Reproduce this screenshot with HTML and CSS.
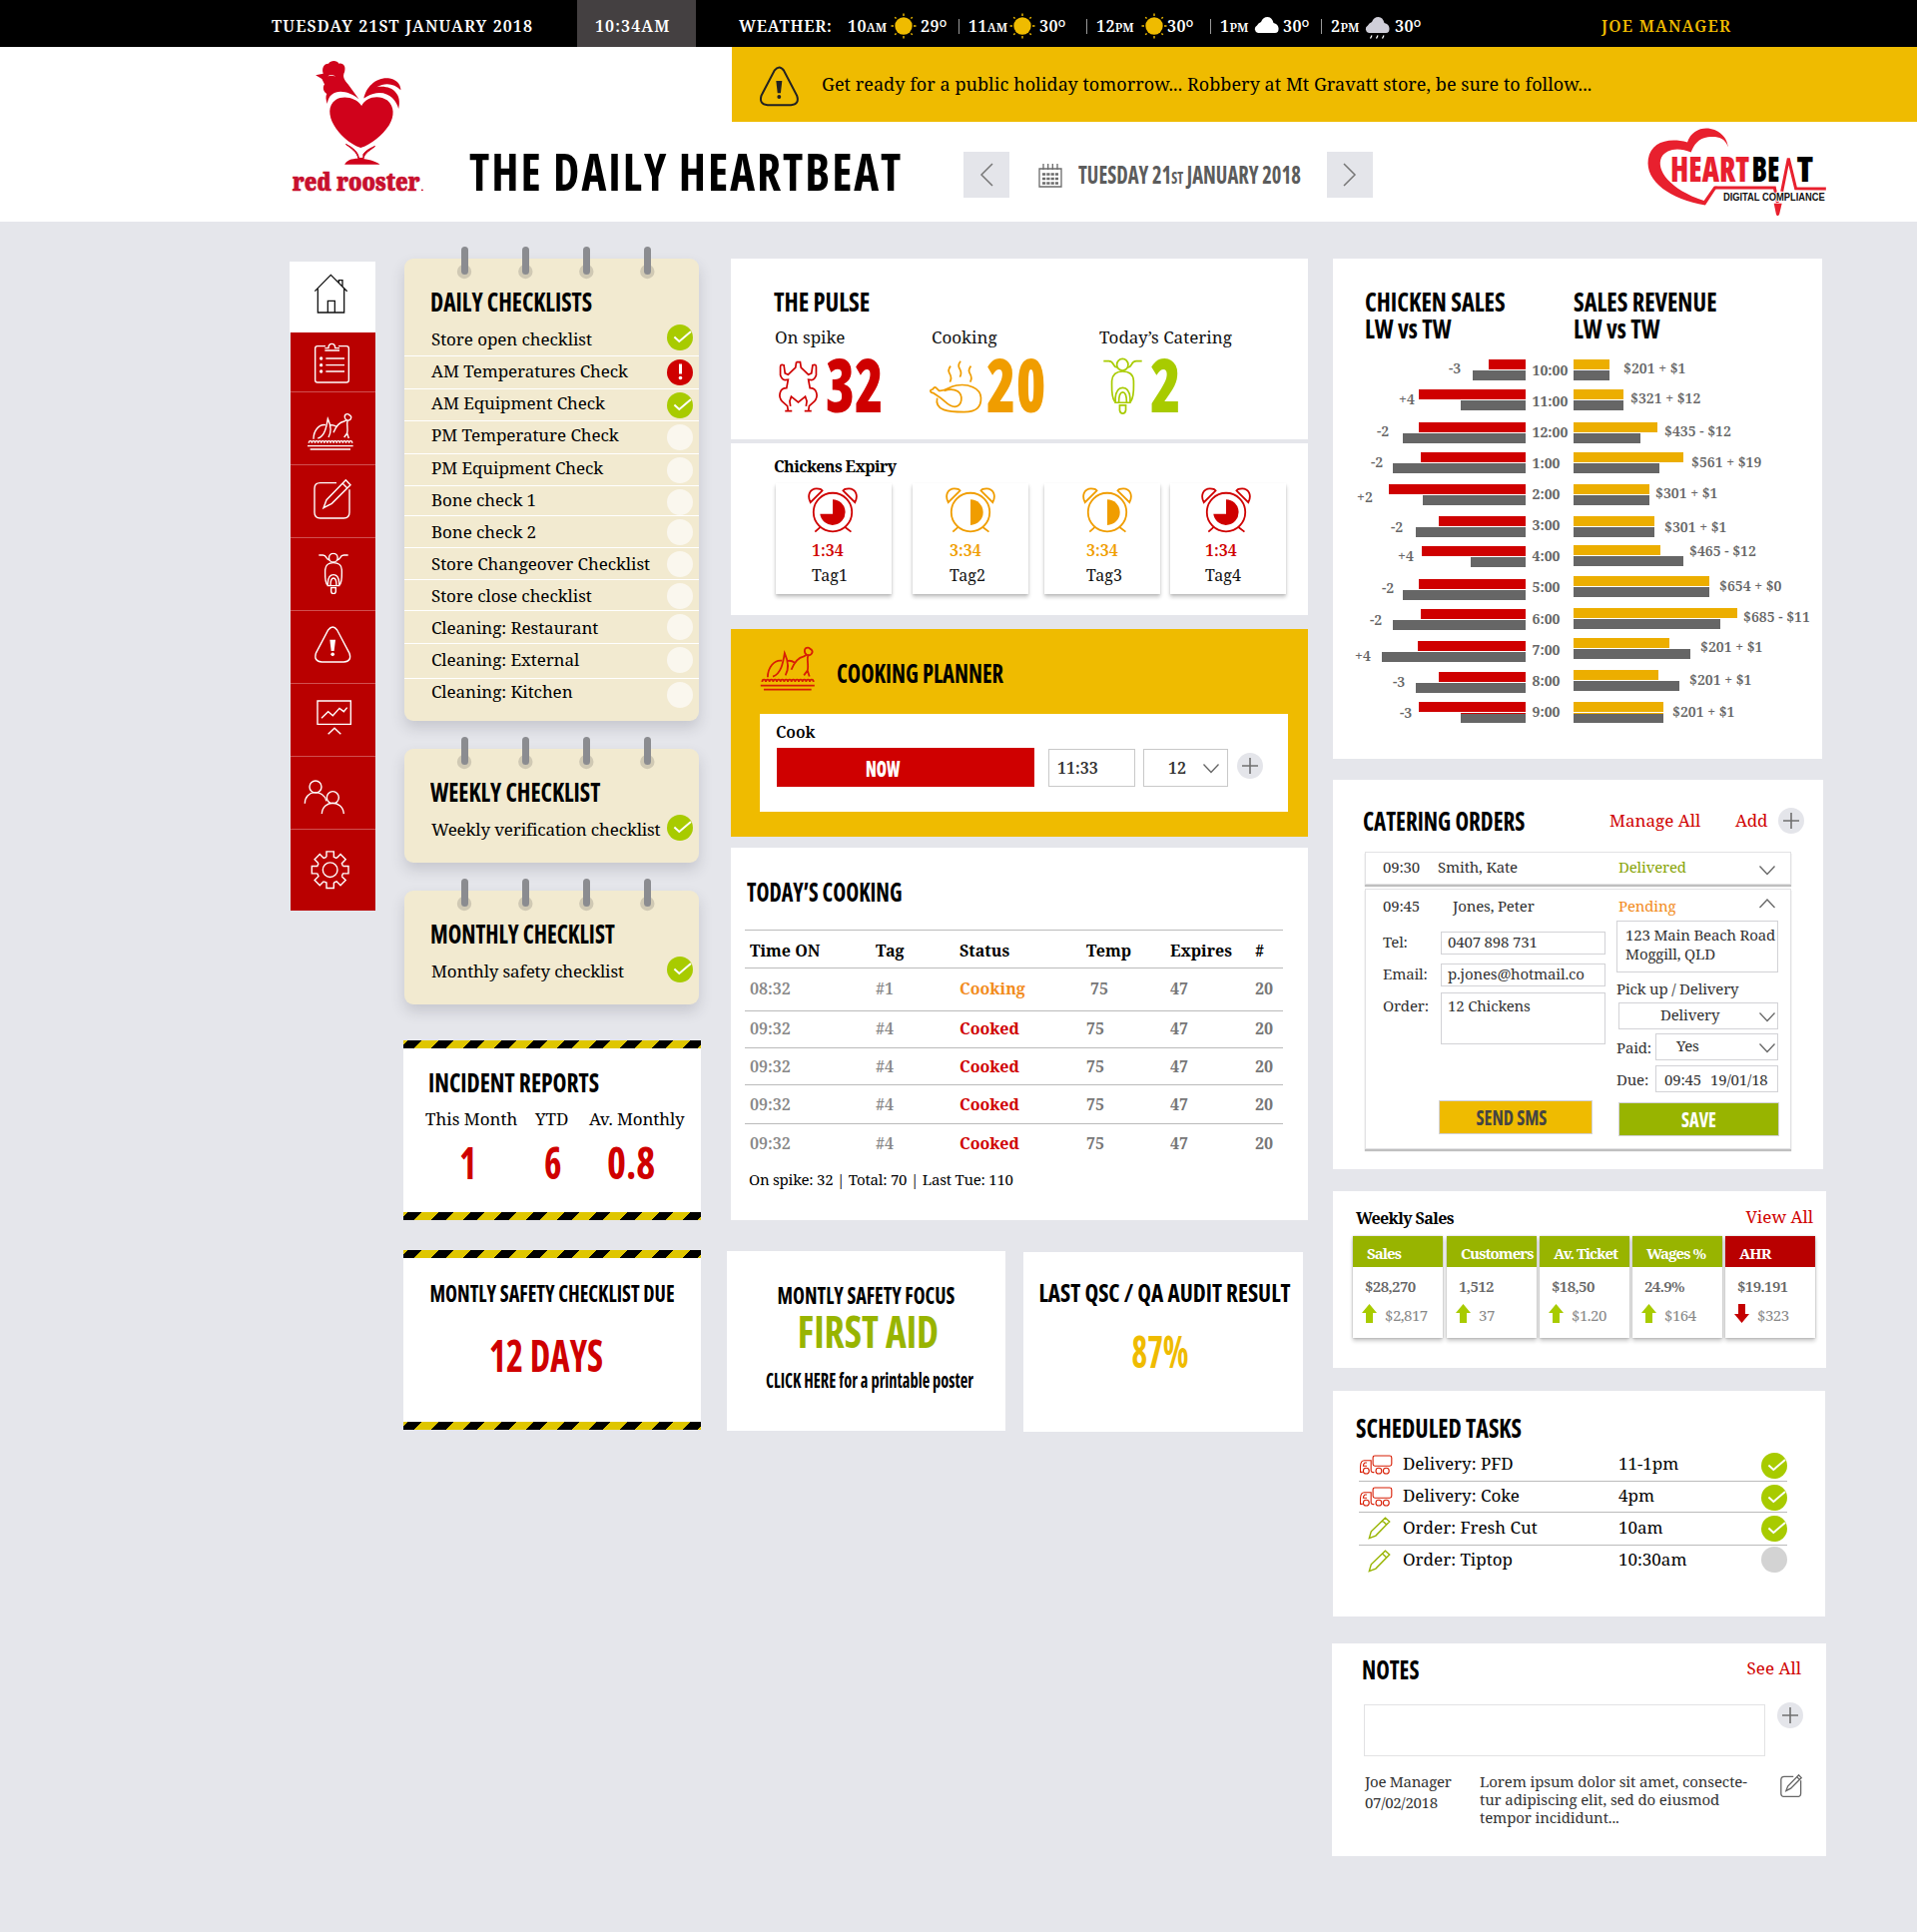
FILE: index.html
```html
<!DOCTYPE html>
<html lang="en">
<head>
<meta charset="utf-8">
<title>The Daily Heartbeat</title>
<link rel="stylesheet" href="styles.css">
</head>
<body>
<svg class="defs" aria-hidden="true">
  <symbol id="check" viewBox="0 0 26 26"><circle cx="13" cy="13" r="13" fill="#a8cb00"/><path d="M7.4 12.6 12.3 17 24 7" fill="none" stroke="#fff" stroke-width="2"/></symbol>
  <symbol id="warn" viewBox="0 0 26 26"><circle cx="13" cy="13" r="13" fill="#cf0000"/><path d="M13.5 4.5V14.5" stroke="#fff" stroke-width="3"/><circle cx="13.5" cy="18.5" r="1.8" fill="#fff"/></symbol>
  <symbol id="empty" viewBox="0 0 26 26"><circle cx="13" cy="13" r="13" fill="#faf7ee"/></symbol>
  <symbol id="plus" viewBox="0 0 26 26"><circle cx="13" cy="13" r="13" fill="#e4e5ea"/><path d="M5 13H21M13 5V21" stroke="#707070" stroke-width="1.6"/></symbol>
  <symbol id="down" viewBox="0 0 16 10"><path d="M.5 .5 8 8.5 15.5 .5"/></symbol>
  <symbol id="up" viewBox="0 0 16 10"><path d="M.5 9 8 1 15.5 9"/></symbol>
  <symbol id="sun" viewBox="0 0 26 26"><circle cx="13" cy="13" r="8.7" fill="#efbb00"/><path d="M13 .5V3M13 23V25.5M.5 13H3M23 13H25.5M4.2 4.2 5.6 5.6M20.4 20.4 21.8 21.8M4.2 21.8 5.6 20.4M20.4 5.6 21.8 4.2" stroke="#efbb00" stroke-width="1.4"/></symbol>
  <symbol id="cloud" viewBox="0 0 26 24"><path d="M4 17A4 4 0 0 1 3 9.500Q4 7 7 6 9 1 13.500 1 18 1 19.500 7 24 8 24.500 12 25 17 21 17Z"/></symbol>
  <symbol id="scooter" viewBox="115 940 94 126" preserveAspectRatio="none"><circle cx="161.500" cy="956" r="13"/><path d="M118 948H130Q137 948 141 956 145 963 150 962M206 948H193Q186 948 182 956 178 963 173 962"/><path d="M144 1038C135 1028 137 1010 137 992Q139 971 161.500 971 186 971 187 992C187 1010 189 1028 180 1038"/><path d="M145 1040V1030Q147 1007 162 1007 177 1007 179 1030V1040ZM153 1040Q153 1017 162 1017 171 1017 171 1040"/><path d="M155 1046H169V1057Q168 1064 162 1064 156 1064 155 1057Z"/></symbol>
  <symbol id="turkey" viewBox="82 520 142 116" preserveAspectRatio="none"><path d="M84 620H221M92 630H213M88 611q0-6 4.650-6 4.650 0 4.650 6 0-6 4.650-6 4.650 0 4.650 6 0-6 4.650-6 4.650 0 4.650 6 0-6 4.650-6 4.650 0 4.650 6 0-6 4.650-6 4.650 0 4.650 6 0-6 4.650-6 4.650 0 4.650 6 0-6 4.650-6 4.650 0 4.650 6 0-6 4.650-6 4.650 0 4.650 6 0-6 4.650-6 4.650 0 4.650 6 0-6 4.650-6 4.650 0 4.650 6 0-6 4.650-6 4.650 0 4.650 6 0-6 4.650-6 4.650 0 4.650 6 0-6 4.650-6 4.650 0 4.650 6 0-6 4.650-6 4.650 0 4.650 6"/><path d="M102 599C102 575 118 554 138 557M115 597C136 591 141 562 145 538 153 556 158 576 147 594M151 558C158 556 165 558 171 562M162 580C168 564 180 549 194 546L201 542C194 538 193 524 204 524 208 524 210 528 213 529 219 535 212 545 205 543 200 552 207 570 203 582L208 597M203 582 194 594"/></symbol>
  <symbol id="edit" viewBox="102 718 114 122"><path d="M171 731H122Q105 731 105 748V820Q105 837 122 837H193Q210 837 210 820V751"/><path d="M132 806 141 782 199 722 213 737 157 793ZM189 732 203 746"/></symbol>
  <symbol id="alert" viewBox="102 1160 116 114" preserveAspectRatio="none"><path d="M146 1173Q160 1155 173 1173L210 1243Q218 1267 193 1269H127Q102 1267 109 1243Z"/><path class="solid" d="M151 1202H168L164 1236H155Z"/><circle class="solid" cx="159.500" cy="1246" r="5.500"/></symbol>
  <symbol id="clock" viewBox="233 718 130 136" preserveAspectRatio="none"><ellipse cx="298" cy="792" rx="50" ry="57"/><path d="M240 763C230 740 240 722 256 722Q268 722 271 728ZM356 763C366 740 356 722 340 722Q328 722 325 728ZM266 836 252 850M330 836 346 850"/></symbol>
  <symbol id="truck" viewBox="108 832 104 62"><rect x="151" y="835" width="58" height="32" rx="6"/><path d="M119 886H112V868Q113 850 124 850H145V882Q147 888 155 886M132 857H126Q121 860 121 867H132"/><circle cx="130" cy="882" r="9"/><circle cx="169" cy="882" r="9"/><circle cx="192" cy="882" r="9"/></symbol>
  <symbol id="pencil" viewBox="134 1015 68 70"><path d="M137 1081 143 1060 186 1019 199 1030 157 1073ZM177 1027 191 1040"/></symbol>
  <symbol id="rings" viewBox="0 0 295 34"><g fill="#d0c9b4"><circle cx="60" cy="25" r="7.200"/><circle cx="121.300" cy="25" r="7.200"/><circle cx="182.300" cy="25" r="7.200"/><circle cx="243.300" cy="25" r="7.200"/></g><g fill="#8b8c90"><rect x="57" y="0" width="7" height="28" rx="3.500"/><rect x="118" y="0" width="7" height="28" rx="3.500"/><rect x="179" y="0" width="7" height="28" rx="3.500"/><rect x="240" y="0" width="7" height="28" rx="3.500"/></g></symbol>
</svg>

<div class="topbar">
  <div class="today">TUESDAY 21ST JANUARY 2018</div>
  <div class="now">10:34AM</div>
  <div class="weather">
    <span class="wlabel">WEATHER:</span>
    <span class="hour"><span>10<small>AM</small></span><svg><use href="#sun"/></svg><span>29<i>o</i></span></span>
    <span class="hour"><span>11<small>AM</small></span><svg><use href="#sun"/></svg><span>30<i>o</i></span></span>
    <span class="hour"><span>12<small>PM</small></span><svg><use href="#sun"/></svg><span>30<i>o</i></span></span>
    <span class="hour"><span>1<small>PM</small></span><svg class="cloud"><use href="#cloud"/></svg><span>30<i>o</i></span></span>
    <span class="hour"><span>2<small>PM</small></span><svg class="cloud rain"><use href="#cloud"/><path d="M7 19.500 5.500 22.500M13 19.500 11.500 22.500M19 19.500 17.500 22.500" stroke="#fff" stroke-width="1.300"/></svg><span>30<i>o</i></span></span>
  </div>
  <div class="user">JOE MANAGER</div>
</div>

<header class="header">
  <div class="brand">
    <svg class="rooster" viewBox="95 180 300 400" preserveAspectRatio="none">
      <g fill="#d0021b">
        <path d="M149 226 166 221C162 205 168 190 178 191 182 180 198 180 201 191 212 188 217 200 214 215 208 232 214 240 222 254L246 298C226 276 200 268 186 284 178 292 177 302 175 312 172 300 171 290 174 282 166 276 164 262 169 254L163 237Z"/>
        <path d="M257 296C262 262 284 232 312 235 328 237 340 252 340 271 326 252 306 246 286 262 318 254 344 280 335 327 330 300 310 270 278 282 268 286 262 292 257 296Z"/>
        <path d="M252 318C262 290 292 284 310 302 326 320 326 350 314 376 298 408 276 432 250 445 222 430 202 404 190 376 178 348 176 316 194 300 212 286 240 294 252 318Z"/>
        <path d="M217 434C228 446 242 456 245 478H256C258 460 272 452 282 440 272 446 262 452 256 464V476H246C244 456 232 444 217 434Z" stroke="#d0021b" stroke-width="1"/>
        <path d="M214 495C218 480 236 474 256 478 274 482 284 486 293 495Z"/>
      </g>
      <path d="M176 229Q186 220 194 230 186 226 176 229Z" fill="#fff"/>
      <text x="97" y="574" textLength="286" lengthAdjust="spacingAndGlyphs">red rooster</text>
      <circle cx="388" cy="572" r="2.500" fill="#c8102e"/>
    </svg>
    <h1 class="title">THE DAILY HEARTBEAT</h1>
  </div>
  <div class="banner">
    <svg><use href="#alert"/></svg>
    <p>Get ready for a public holiday tomorrow... Robbery at Mt Gravatt store, be sure to follow...</p>
  </div>
  <div class="datenav">
    <button class="step"><svg viewBox="0 0 14 24"><path d="M13 1 2 12 13 23"/></svg></button>
    <svg class="calendar" viewBox="0 0 24 24"><path d="M1 5H23V23H1ZM5 0V6M9.700 0V6M14.300 0V6M19 0V6" fill="none" stroke="#6b6b6b" stroke-width="1.300"/><path d="M4 10.500H20M4 15H20M4 19.500H20" fill="none" stroke="#6b6b6b" stroke-width="2.600" stroke-dasharray="3.200 1.100"/></svg>
    <h2 class="cond date">TUESDAY 21<small>ST</small> JANUARY 2018</h2>
    <button class="step"><svg viewBox="0 0 14 24"><path d="M1 1 12 12 1 23"/></svg></button>
    <svg class="hb" viewBox="590 380 560 280">
      <path d="M841 445C830 410 800 412 780 414 752 418 738 436 729 460 690 444 655 450 640 475 622 512 664 572 768 606L798 563H809L772 619C668 602 590 548 600 480 608 430 660 414 718 430 730 390 770 380 800 392 826 404 838 420 841 445Z" fill="#e8202e"/>
      <path d="M800 566.500H981L990 612M1003 578 1023 478 1045 569 1136 570" fill="none" stroke="#e8202e" stroke-width="3"/>
      <path d="M979 614H1003L995 648Q990 655 986 648Z" fill="#e8202e"/>
      <text class="hand red" x="667" y="550" textLength="238" lengthAdjust="spacingAndGlyphs">HEART</text>
      <text class="hand" x="912" y="548" textLength="84" lengthAdjust="spacingAndGlyphs">BE</text>
      <text class="hand" x="1048" y="550" textLength="50" lengthAdjust="spacingAndGlyphs">T</text>
      <text class="tagline" x="826" y="606" textLength="307" lengthAdjust="spacingAndGlyphs">DIGITAL COMPLIANCE</text>
    </svg>
  </div>
</header>

<main class="main">
  <nav class="side">
    <a class="home"><svg viewBox="30 66 258 213"><path d="M106 155 154 106 203 155M115 148V219H194V148M145 219V184H166V219M178 128V122H189V142"/></svg></a>
    <a><svg viewBox="33 279 255 180"><path d="M138 320H114Q107 320 107 327V422Q107 429 114 429H201Q208 429 208 422V327Q208 320 201 320H177"/><path d="M136 333H180M136 326H147Q147 313 157 313 167 313 167 326H180M139 357H195M139 377H195M139 396H195"/><circle class="solid" cx="125" cy="357" r="5"/><circle class="solid" cx="125" cy="377" r="5"/><circle class="solid" cx="125" cy="396" r="5"/></svg></a>
    <a><svg viewBox="33 459 255 219"><use href="#turkey" x="82" y="520" width="142" height="116"/></svg></a>
    <a><svg viewBox="33 678 255 219"><use href="#edit" x="102" y="718" width="114" height="122"/></svg></a>
    <a><svg viewBox="33 897 255 219"><use href="#scooter" x="115" y="940" width="94" height="126"/></svg></a>
    <a><svg viewBox="33 1116 255 219"><use href="#alert" x="102" y="1160" width="116" height="114"/></svg></a>
    <a><svg viewBox="33 1335 255 219"><path d="M114 1386H214V1456H114ZM126 1438 146 1418 160 1430 180 1408 193 1418 203 1406M146 1486 165 1468 184 1486"/></svg></a>
    <a><svg viewBox="33 115 255 219"><circle cx="108" cy="205" r="18"/><path d="M76 255C76 213 132 211 141 248"/><circle cx="160" cy="237" r="18"/><path d="M127 286C129 243 190 243 193 286"/></svg></a>
    <a><svg viewBox="33 334 255 242"><g transform="translate(152 454)"><circle r="22"/><path id="cog" d="M-11-38.500V-55H11V-38.500L19.400-35"/><use href="#cog" transform="rotate(45)"/><use href="#cog" transform="rotate(90)"/><use href="#cog" transform="rotate(135)"/><use href="#cog" transform="rotate(180)"/><use href="#cog" transform="rotate(225)"/><use href="#cog" transform="rotate(270)"/><use href="#cog" transform="rotate(315)"/></g></svg></a>
  </nav>

  <div class="col checks">
    <section class="pad daily">
      <svg class="rings"><use href="#rings"/></svg>
      <h2 class="cond">DAILY CHECKLISTS</h2>
      <ul>
        <li><span>Store open checklist</span><svg><use href="#check"/></svg></li>
        <li><span>AM Temperatures Check</span><svg><use href="#warn"/></svg></li>
        <li><span>AM Equipment Check</span><svg><use href="#check"/></svg></li>
        <li><span>PM Temperature Check</span><svg><use href="#empty"/></svg></li>
        <li><span>PM Equipment Check</span><svg><use href="#empty"/></svg></li>
        <li><span>Bone check 1</span><svg><use href="#empty"/></svg></li>
        <li><span>Bone check 2</span><svg><use href="#empty"/></svg></li>
        <li><span>Store Changeover Checklist</span><svg><use href="#empty"/></svg></li>
        <li><span>Store close checklist</span><svg><use href="#empty"/></svg></li>
        <li><span>Cleaning: Restaurant</span><svg><use href="#empty"/></svg></li>
        <li><span>Cleaning: External</span><svg><use href="#empty"/></svg></li>
        <li><span>Cleaning: Kitchen</span><svg><use href="#empty"/></svg></li>
      </ul>
    </section>
    <section class="pad short">
      <svg class="rings"><use href="#rings"/></svg>
      <h2 class="cond">WEEKLY CHECKLIST</h2>
      <ul><li><span>Weekly verification checklist</span><svg><use href="#check"/></svg></li></ul>
    </section>
    <section class="pad short monthly">
      <svg class="rings"><use href="#rings"/></svg>
      <h2 class="cond">MONTHLY CHECKLIST</h2>
      <ul><li><span>Monthly safety checklist</span><svg><use href="#check"/></svg></li></ul>
    </section>
    <section class="hazard incidents">
      <h2 class="cond">INCIDENT REPORTS</h2>
      <div class="stats">
        <div><span>This Month</span><b class="cond">1</b></div>
        <div><span>YTD</span><b class="cond">6</b></div>
        <div><span>Av. Monthly</span><b class="cond">0.8</b></div>
      </div>
    </section>
    <section class="hazard due">
      <h3 class="cond">MONTLY SAFETY CHECKLIST DUE</h3>
      <b class="cond big">12 DAYS</b>
    </section>
  </div>

  <div class="col middle">
    <section class="card pulse">
      <h2 class="cond">THE PULSE</h2>
      <div class="figures">
        <div class="fig red"><span>On spike</span><div>
          <svg class="raw" viewBox="156 334 100 154" preserveAspectRatio="none"><path d="M201 339H211L213 355 232 376 240 372 243 348Q252 344 252 353V378Q248 392 240 392L232 391 236 416C254 416 259 440 247 456L234 469 232 484M222 484H240M201 339 199 355 180 376 172 372 169 348Q160 344 160 353V378Q164 392 172 392L180 391 176 416C158 416 153 440 165 456L178 469 180 484M190 484H172M186 470 184 455 188 441 206 458 224 441 228 455 226 470"/></svg>
          <b class="cond">32</b></div></div>
        <div class="fig orange"><span>Cooking</span><div>
          <svg class="roast" viewBox="550 330 138 162" preserveAspectRatio="none"><path d="M570 446C562 484 600 488 640 488 675 488 685 470 684 445 683 415 650 402 620 408 600 412 590 427 575 424L567 415C561 411 560 418 558 420 550 420 550 430 560 431L572 440C590 452 598 472 616 472 636 470 638 438 624 426 612 417 598 420 588 424M605 350Q596 362 603 374 609 386 603 398M631 335Q622 348 629 359 635 372 629 383M658 350Q649 362 656 374 662 386 656 398"/></svg>
          <b class="cond">20</b></div></div>
        <div class="fig green"><span>Today’s Catering</span><div>
          <svg class="scoot"><use href="#scooter"/></svg>
          <b class="cond">2</b></div></div>
      </div>
    </section>
    <section class="card expiry">
      <h4>Chickens Expiry</h4>
      <div class="tags">
        <div class="tag red"><svg viewBox="233 718 130 136" preserveAspectRatio="none"><use href="#clock" x="233" y="718" width="130" height="136"/><path class="solid" d="M298 754A33 38 0 1 1 265 797H298Z"/></svg><b>1:34</b><span>Tag1</span></div>
        <div class="tag orange"><svg viewBox="233 718 130 136" preserveAspectRatio="none"><use href="#clock" x="233" y="718" width="130" height="136"/><path class="solid" d="M298 754A33 38 0 0 1 298 830Z"/></svg><b>3:34</b><span>Tag2</span></div>
        <div class="tag orange"><svg viewBox="233 718 130 136" preserveAspectRatio="none"><use href="#clock" x="233" y="718" width="130" height="136"/><path class="solid" d="M298 754A33 38 0 0 1 298 830Z"/></svg><b>3:34</b><span>Tag3</span></div>
        <div class="tag red"><svg viewBox="233 718 130 136" preserveAspectRatio="none"><use href="#clock" x="233" y="718" width="130" height="136"/><path class="solid" d="M298 754A33 38 0 1 1 265 797H298Z"/></svg><b>1:34</b><span>Tag4</span></div>
      </div>
    </section>
    <section class="planner">
      <div class="phead"><svg><use href="#turkey"/></svg><h2 class="cond">COOKING PLANNER</h2></div>
      <div class="pbox">
        <label>Cook</label>
        <div class="prow">
          <button class="cook"><span class="cond">NOW</span></button>
          <div class="field time">11:33</div>
          <div class="field qty">12<svg class="chev"><use href="#down"/></svg></div>
          <svg class="plus"><use href="#plus"/></svg>
        </div>
      </div>
    </section>
    <section class="card cooking">
      <h2 class="cond">TODAY’S COOKING</h2>
      <table>
        <tr><th>Time ON</th><th>Tag</th><th>Status</th><th>Temp</th><th>Expires</th><th>#</th></tr>
        <tr><td>08:32</td><td>#1</td><td class="orange">Cooking</td><td>75</td><td>47</td><td>20</td></tr>
        <tr><td>09:32</td><td>#4</td><td class="red">Cooked</td><td>75</td><td>47</td><td>20</td></tr>
        <tr><td>09:32</td><td>#4</td><td class="red">Cooked</td><td>75</td><td>47</td><td>20</td></tr>
        <tr><td>09:32</td><td>#4</td><td class="red">Cooked</td><td>75</td><td>47</td><td>20</td></tr>
        <tr><td>09:32</td><td>#4</td><td class="red">Cooked</td><td>75</td><td>47</td><td>20</td></tr>
      </table>
      <p>On spike: 32 | Total: 70 | Last Tue: 110</p>
    </section>
    <div class="pair">
      <section class="card focus">
        <h3 class="cond">MONTLY SAFETY FOCUS</h3>
        <b class="cond big">FIRST AID</b>
        <p class="cond">CLICK HERE for a printable poster</p>
      </section>
      <section class="card audit">
        <h3 class="cond">LAST QSC / QA AUDIT RESULT</h3>
        <b class="cond big">87%</b>
      </section>
    </div>
  </div>

  <div class="col right">
    <section class="card sales">
      <div class="sheads"><h2 class="cond">CHICKEN SALES<br>LW vs TW</h2><h2 class="cond">SALES REVENUE<br>LW vs TW</h2></div>
      <svg class="chart" viewBox="1335 355 490 380">
        <g fill="#cf0000"><path d="M1491 360h37v10h-37zM1421 390h107v10h-107zM1421 423h107v10h-107zM1423 453h105v10h-105zM1391 485h137v10h-137zM1441 517h87v10h-87zM1424 547h104v10h-104zM1421 580h107v10h-107zM1423 610h105v10h-105zM1420 642h108v10h-108zM1441 673h87v10h-87zM1421 703h107v10h-107zM1463 714h65v1h-65z"/></g>
        <g fill="#666"><path d="M1475 371h53v10h-53zM1463 401h65v10h-65zM1405 434h123v10h-123zM1395 464h133v10h-133zM1425 496h103v10h-103zM1418 528h110v10h-110zM1473 558h55v10h-55zM1405 591h123v10h-123zM1395 621h133v10h-133zM1384 653h144v10h-144zM1418 684h110v10h-110zM1463 715h65v9h-65z"/>
        <path d="M1576 371h36v10h-36zM1576 401h50v10h-50zM1576 434h67v10h-67zM1576 464h86v10h-86zM1576 496h76v10h-76zM1576 528h81v10h-81zM1576 557h110v10h-110zM1576 588h136v10h-136zM1576 620h147v10h-147zM1576 650h117v10h-117zM1576 682h106v10h-106zM1576 715h90v9h-90z"/></g>
        <g fill="#ecae00"><path d="M1576 360h36v10h-36zM1576 390h50v10h-50zM1576 423h84v10h-84zM1576 453h110v10h-110zM1576 485h76v10h-76zM1576 517h81v10h-81zM1576 546h87v10h-87zM1576 577h136v10h-136zM1576 609h164v10h-164zM1576 639h96v10h-96zM1576 671h85v10h-85zM1576 703h90v10h-90zM1576 714h90v1h-90z"/></g>
        <g class="delta"><text x="1451" y="374">-3</text><text x="1401" y="405">+4</text><text x="1379" y="437">-2</text><text x="1373" y="468">-2</text><text x="1359" y="503">+2</text><text x="1393" y="533">-2</text><text x="1400" y="562">+4</text><text x="1384" y="594">-2</text><text x="1372" y="626">-2</text><text x="1357" y="662">+4</text><text x="1395" y="688">-3</text><text x="1402" y="719">-3</text></g>
        <g class="hours"><text x="1534.500" y="375.500">10:00</text><text x="1534.500" y="406.500">11:00</text><text x="1534.500" y="437.500">12:00</text><text x="1534.500" y="468.500">1:00</text><text x="1534.500" y="499.500">2:00</text><text x="1534.500" y="531">3:00</text><text x="1534.500" y="562">4:00</text><text x="1534.500" y="593">5:00</text><text x="1534.500" y="624.500">6:00</text><text x="1534.500" y="655.500">7:00</text><text x="1534.500" y="686.500">8:00</text><text x="1534.500" y="717.500">9:00</text></g>
        <g class="money"><text x="1626" y="374">$201 + $1</text><text x="1633" y="404">$321 + $12</text><text x="1667" y="436.500">$435 - $12</text><text x="1694" y="467.500">$561 + $19</text><text x="1658" y="498.500">$301 + $1</text><text x="1667" y="532.500">$301 + $1</text><text x="1692" y="556.500">$465 - $12</text><text x="1722" y="591.500">$654 + $0</text><text x="1746" y="622.500">$685 - $11</text><text x="1703" y="652.500">$201 + $1</text><text x="1692" y="685.500">$201 + $1</text><text x="1675" y="717.500">$201 + $1</text></g>
      </svg>
    </section>

    <section class="card catering">
      <div class="chead"><h2 class="cond">CATERING ORDERS</h2><a>Manage All</a><a>Add</a><svg class="plus"><use href="#plus"/></svg></div>
      <div class="order">
        <div class="ohead"><span>09:30</span><span>Smith, Kate</span><span class="done">Delivered</span><svg class="chev"><use href="#down"/></svg></div>
      </div>
      <div class="order open">
        <div class="ohead"><span>09:45</span><span>Jones, Peter</span><span class="pending">Pending</span><svg class="chev"><use href="#up"/></svg></div>
        <div class="form">
          <div class="left">
            <label>Tel:</label><div class="in">0407 898 731</div>
            <label>Email:</label><div class="in">p.jones@hotmail.co</div>
            <label>Order:</label><div class="in tall">12 Chickens</div>
            <button class="sms"><span class="cond">SEND SMS</span></button>
          </div>
          <div class="rightf">
            <div class="in addr">123 Main Beach Road<br>Moggill, QLD</div>
            <label class="pick">Pick up / Delivery</label>
            <div class="in sel wide">Delivery<svg class="chev"><use href="#down"/></svg></div>
            <div class="line"><label>Paid:</label><div class="in sel yes">Yes<svg class="chev"><use href="#down"/></svg></div></div>
            <div class="line"><label>Due:</label><div class="in sel when"><span>09:45</span><span>19/01/18</span></div></div>
            <button class="save"><span class="cond">SAVE</span></button>
          </div>
        </div>
      </div>
    </section>

    <section class="card weekly">
      <div class="whead"><h4>Weekly Sales</h4><a>View All</a></div>
      <div class="metrics">
        <div class="metric"><h5>Sales</h5><b>$28,270</b><p><svg viewBox="0 0 15 19"><path d="M7.500 0 15 9H11V19H4V9H0Z"/></svg>$2,817</p></div>
        <div class="metric"><h5>Customers</h5><b>1,512</b><p><svg viewBox="0 0 15 19"><path d="M7.500 0 15 9H11V19H4V9H0Z"/></svg>37</p></div>
        <div class="metric"><h5>Av. Ticket</h5><b>$18,50</b><p><svg viewBox="0 0 15 19"><path d="M7.500 0 15 9H11V19H4V9H0Z"/></svg>$1.20</p></div>
        <div class="metric"><h5>Wages %</h5><b>24.9%</b><p><svg viewBox="0 0 15 19"><path d="M7.500 0 15 9H11V19H4V9H0Z"/></svg>$164</p></div>
        <div class="metric bad"><h5>AHR</h5><b>$19.191</b><p><svg viewBox="0 0 15 19"><path d="M7.500 19 15 10H11V0H4V10H0Z"/></svg>$323</p></div>
      </div>
    </section>

    <section class="card tasks">
      <h2 class="cond">SCHEDULED TASKS</h2>
      <div class="task"><svg class="truck"><use href="#truck"/></svg><span>Delivery: PFD</span><span>11-1pm</span><svg class="dot"><use href="#check"/></svg></div>
      <div class="task"><svg class="truck"><use href="#truck"/></svg><span>Delivery: Coke</span><span>4pm</span><svg class="dot"><use href="#check"/></svg></div>
      <div class="task"><svg class="pen"><use href="#pencil"/></svg><span>Order: Fresh Cut</span><span>10am</span><svg class="dot"><use href="#check"/></svg></div>
      <div class="task"><svg class="pen"><use href="#pencil"/></svg><span>Order: Tiptop</span><span>10:30am</span><i class="dot todo"></i></div>
    </section>

    <section class="card notes">
      <div class="nhead"><h2 class="cond">NOTES</h2><a>See All</a></div>
      <div class="compose"><div class="box"></div><svg class="plus"><use href="#plus"/></svg></div>
      <div class="note"><div class="by">Joe Manager<br>07/02/2018</div><p>Lorem ipsum dolor sit amet, consecte-<br>tur adipiscing elit, sed do eiusmod<br>tempor incididunt...</p><svg><use href="#edit"/></svg></div>
    </section>
  </div>
</main>
</body>
</html>
```
FILE: styles.css
```css
* { box-sizing: border-box; margin: 0; padding: 0; }
body { background: #e5e6eb; font: 17px/22px "Noto Serif", "DejaVu Serif Condensed", "Liberation Serif", serif; color: #000; width: 1920px; min-height: 1935px; }
ul { list-style: none; }
button { border: 0; font: inherit; }
svg { display: block; fill: none; flex: none; overflow: visible; }
svg path, svg circle, svg ellipse, svg rect { vector-effect: non-scaling-stroke; }
.defs { width: 0; height: 0; position: absolute; }
.solid { fill: currentColor; stroke: none; }
.red { color: #cf0000; }
.orange { color: #f09d00; }
.green { color: #a8cb00; }

.cond { --sx: .907; font-family: "Open Sans", "Open Sans Condensed", "Liberation Sans", sans-serif; font-stretch: 75%; font-weight: 700; display: block; white-space: nowrap; transform: scaleX(var(--sx)); transform-origin: 0 50%; }
h2.cond { font-size: 26px; line-height: 30px; }
h3.cond { font-size: 23px; line-height: 26px; }
.big { font-size: 45px; line-height: 46px; }

/* top bar */
.topbar { background: #000; color: #fff; height: 47px; display: flex; font-size: 16px; font-weight: 600; line-height: 52px; letter-spacing: 1.1px; white-space: nowrap; }
.today { width: 578px; padding-left: 272px; }
.now { width: 119px; background: #444041; padding-left: 18px; }
.weather { display: flex; padding-left: 43px; width: 907px; }
.wlabel { width: 109px; letter-spacing: .8px; }
.weather small { font-size: 12px; letter-spacing: 0; }
.hour { display: grid; letter-spacing: .4px; position: relative; }
.hour i { font: 500 13px/1 "Lato", sans-serif; vertical-align: 5px; }
.hour:nth-child(2) { grid-template-columns: 43px 30px 48px; }
.hour:nth-child(3) { grid-template-columns: 41px 30px 57px; }
.hour:nth-child(4) { grid-template-columns: 45px 26px 53px; }
.hour:nth-child(5) { grid-template-columns: 34px 29px 48px; }
.hour:nth-child(6) { grid-template-columns: 34px 30px 40px; }
.hour:nth-child(n+3)::before { content: ""; position: absolute; left: -10px; top: 19px; width: 1px; height: 15px; background: #999; }
.hour svg { width: 26px; height: 26px; margin-top: 13px; }
.hour svg.cloud { height: 24px; margin-top: 16px; fill: #fff; }
.hour svg.rain { fill: #cfced8; }
.user { color: #efbb00; letter-spacing: 1.2px; }

/* header */
.header { background: #fff; height: 175px; display: grid; grid-template: 75px 100px / 733px 1fr; }
.brand { grid-row: 1 / 3; display: flex; padding-left: 292px; }
.rooster { width: 134px; height: 133px; margin-top: 13px; }
.rooster text { font: 900 76px "Noto Serif", serif; fill: #c8102e; stroke: #c8102e; stroke-width: 2; }
.title { font: 700 52px/60px "Open Sans", sans-serif; font-stretch: 75%; letter-spacing: 2.2px; white-space: nowrap; transform: scaleX(.907); transform-origin: 0 50%; margin: 94px 0 0 44px; }
.banner { background: #efbb00; display: flex; padding-left: 27px; }
.banner svg { width: 41px; height: 41px; margin-top: 19px; stroke: #222; stroke-width: 2; color: #222; }
.banner p { font-size: 18px; line-height: 74px; letter-spacing: .05px; margin-left: 22px; white-space: nowrap; }
.datenav { display: flex; padding: 30px 0 0 232px; }
.step { width: 46px; height: 46px; background: #e4e5ea; padding: 11px 16px; }
.step svg { width: 14px; height: 24px; stroke: #777; stroke-width: 1.5; }
.calendar { width: 24px; height: 24px; margin: 12px 16px 0 29px; }
.datenav .date { --sx: .857; color: #5c5c5c; width: 249px; line-height: 46px; font-size: 24px; }
.date small { font-size: 16px; }
.hb { width: 187px; height: 93px; margin: -26px 0 0 272px; }
.hand { font: 800 104px "Open Sans", sans-serif; font-stretch: 75%; fill: #000; }
.hand.red { fill: #e8202e; }
.tagline { font: 700 31px "Liberation Sans", sans-serif; fill: #111; stroke: #fff; stroke-width: 5px; paint-order: stroke; }

/* layout */
.main { display: flex; align-items: flex-start; padding: 37px 0 0 290px; }
.col { display: flex; flex-direction: column; }
.card { background: #fff; }
.checks { width: 298px; margin-left: 28px; }
.middle { width: 582px; margin-left: 26px; }
.right { width: 495px; margin-left: 24px; }

/* side navigation */
.side { width: 86px; margin-top: 3px; }
.side a { display: block; height: 73px; margin-left: 1px; background: #b90000; color: #fff; border-bottom: 1px solid #d05050; }
.side a.home { height: 71px; margin-left: 0; background: #fff; color: #111; border: 0; }
.side a:nth-child(2) { height: 60px; }
.side a:last-child { height: 81px; border: 0; }
.side svg { width: 85px; height: 73px; stroke: currentColor; stroke-width: 1.4; }
.side .home svg { width: 86px; height: 71px; stroke-width: 1.3; }
.side a:nth-child(2) svg { height: 60px; }
.side a:last-child svg { height: 81px; }

/* notepads */
.pad { width: 295px; margin-left: 1px; background: #f2ead0; border-radius: 9px; position: relative; padding-top: 28px; box-shadow: 0 7px 14px rgba(60,60,80,.18); }
.pad .rings { position: absolute; left: 0; top: -12px; width: 295px; height: 34px; }
.pad h2 { margin: 0 0 7px 26px; }
.daily { height: 463px; }
.short { height: 114px; margin-top: 28px; }
.monthly h2 { --sx: .88; }
.pad li { display: flex; justify-content: space-between; height: 32px; padding: 0 6px 0 27px; line-height: 31px; border-bottom: 1px solid #fff; white-space: nowrap; letter-spacing: -.07px; }
.pad li:last-child { border: 0; }
.short li { letter-spacing: -.15px; }
.pad li svg { width: 26px; height: 26px; margin-top: 3px; }
.pad li:nth-child(1) { height: 33px; }
.pad li:nth-child(1) svg { margin-top: 1px; }
.pad li:nth-child(2), .pad li:nth-child(4), .pad li:nth-child(10) { height: 33px; }
.pad li:nth-child(2) { line-height: 29px; }
.pad li:nth-child(3), .pad li:nth-child(4), .pad li:nth-child(5), .pad li:nth-child(6) { line-height: 28px; }
.pad li:nth-child(6) { height: 30px; }
.pad li:nth-child(9) { height: 31px; }
.pad li:nth-child(10) { line-height: 33px; }
.pad li:nth-child(11) { height: 35px; }
.pad li:nth-child(12) { line-height: 25px; }

/* hazard cards */
.hazard { height: 180px; background: repeating-linear-gradient(135deg, #dfc600 0 3px, #000 3px 13.400px, #dfc600 13.400px 22.270px) top / 100% 8px no-repeat, repeating-linear-gradient(135deg, #dfc600 0 3px, #000 3px 13.400px, #dfc600 13.400px 22.270px) bottom / 100% 8px no-repeat, #fff; }
.incidents { margin-top: 36px; padding-top: 27px; }
.incidents h2 { margin-left: 25px; }
.stats { display: grid; grid-template-columns: 110px 54px 110px; padding-left: 22px; margin-top: 11px; }
.stats span { display: block; line-height: 22px; white-space: nowrap; }
.stats div:nth-child(3) span { letter-spacing: -.1px; }
.stats b { --sx: .83; font-size: 45px; line-height: 46px; color: #cf0000; margin: 9px 0 0 34px; }
.stats div:nth-child(2) b { margin-left: 9px; }
.stats div:nth-child(3) b { --sx: .9; margin-left: 18px; }
.due { margin-top: 30px; padding-top: 30px; text-align: center; }
.due .cond, .pair .cond { transform-origin: 50% 50%; }
.due h3 { --sx: .88; }
.due .big { --sx: .815; color: #cf0000; margin: 26px 12px 0 0; }

/* pulse */
.middle .card, .planner { margin-left: 4px; width: 578px; }
.pulse { height: 181px; padding: 28px 0 0 43px; }
.pulse h2 { --sx: .94; }
.figures { display: grid; grid-template-columns: 157px 168px 180px; margin-top: 10px; }
.fig > span { color: #111; padding-left: 1px; white-space: nowrap; }
.fig > div { display: flex; margin-top: 8px; height: 58px; }
.fig svg { stroke: currentColor; stroke-width: 1.7; }
.fig b { --sx: .78; font-size: 75px; line-height: 54px; font-weight: 800; }
.fig.orange b { --sx: .8; }
.fig.green b { --sx: .84; }
.raw { width: 39px; height: 52px; margin: 4px 8px 0 5px; }
.roast { width: 53px; height: 54px; margin: 3px 4px 0 -1px; }
.scoot { width: 41px; height: 57px; margin: 1px 7px 0 4px; }

/* expiry */
.expiry { height: 172px; margin-top: 4px; padding: 12px 0 0 43px; }
h4 { font-size: 16px; font-weight: 700; letter-spacing: -.6px; line-height: 22px; }
.tags { display: flex; margin: 6px 0 0 2px; }
.tag { width: 116px; height: 111px; padding: 4px 0 0 36px; box-shadow: 0 3px 4px rgba(0,0,0,.22), 0 1px 2px rgba(0,0,0,.1); }
.tag:nth-child(2) { margin-left: 21px; padding-left: 37px; }
.tag:nth-child(3) { margin-left: 16px; padding-left: 42px; }
.tag:nth-child(4) { margin-left: 10px; padding-left: 35px; }
.tag svg { width: 50px; height: 46px; margin-left: -4px; stroke: currentColor; stroke-width: 1.8; }
.tag b { display: block; font-weight: 600; font-size: 16px; line-height: 22px; margin-top: 6px; }
.tag span { display: block; color: #111; font-size: 16px; line-height: 22px; margin-top: 3px; }

/* planner */
.planner { margin-top: 14px; height: 208px; background: #efbb00; padding: 17px 0 0 29px; }
.phead { display: flex; }
.phead svg { width: 56px; height: 46px; stroke: #d81e05; stroke-width: 1.8; }
.phead h2 { --sx: .865; margin: 12px 0 0 21px; }
.pbox { width: 529px; height: 98px; background: #fff; margin-top: 22px; padding: 7px 0 0 16px; }
.pbox label { display: block; font-weight: 600; font-size: 16px; line-height: 22px; }
.prow { display: flex; margin-top: 5px; }
.cook { width: 258px; height: 39px; background: #cf0000; color: #fff; text-align: left; padding-left: 89px; margin-left: 1px; }
.cook span { --sx: .75; font-size: 22px; line-height: 38px; font-weight: 800; }
.field { height: 38px; margin-top: 1px; border: 1px solid #c9c9c9; font-weight: 600; font-size: 16px; line-height: 36px; color: #333; display: flex; }
.time { width: 87px; margin-left: 14px; padding-left: 8px; }
.qty { width: 85px; margin-left: 8px; padding-left: 24px; }
.chev { width: 16px; height: 10px; stroke: #666; stroke-width: 1.3; }
.qty .chev { margin: 14px 0 0 17px; }
.plus { width: 26px; height: 26px; }
.prow .plus { margin: 5px 0 0 9px; }

/* cooking table */
.cooking { margin-top: 11px; height: 373px; padding: 29px 0 0 14px; }
.cooking h2 { --sx: .845; margin-left: 2px; }
table { width: 539px; margin-top: 23px; border-collapse: collapse; table-layout: fixed; border-top: 1px solid #bbb; font-size: 16px; }
th, td { text-align: left; font-weight: 700; padding: 0 0 0 5px; white-space: nowrap; height: 37px; vertical-align: middle; color: #777; border-bottom: 1px solid #bbb; }
td:first-child, td:nth-child(2) { font-weight: 600; color: #888; }
tr th { color: #000; height: 38px; padding-top: 3px; }
tr:nth-child(2) td { height: 43px; padding-bottom: 2px; }
tr:nth-child(3) td { padding-bottom: 3px; }
tr:nth-child(5) td { height: 39px; }
tr:last-child td { border: 0; height: 42px; padding-bottom: 3px; }
th:nth-child(1) { width: 126px; } th:nth-child(2) { width: 84px; } th:nth-child(3) { width: 127px; } th:nth-child(4) { width: 84px; } th:nth-child(5) { width: 85px; }
td.orange { color: #f28c1e; } td.red { color: #cf0000; }
tr:nth-child(2) td:nth-child(4) { padding-left: 9px; }
.cooking p { font-size: 15px; letter-spacing: -.22px; margin: 2px 0 0 4px; }

/* bottom pair */
.pair { display: flex; margin-top: 31px; text-align: center; }
.middle .pair .card { margin: 0; height: 180px; }
.middle .pair .focus { width: 279px; padding-top: 31px; }
.middle .pair .audit { width: 280px; margin: 1px 0 0 18px; padding-top: 27px; }
.focus h3 { --sx: .873; }
.focus .big { --sx: .875; color: #98b400; margin: 0 0 0 4px; }
.focus p { --sx: .783; font-size: 21px; line-height: 24px; margin: 14px -18px 0 -11px; }
.audit h3.cond { --sx: .93; font-size: 25px; margin-left: 3px; }
.audit .big { --sx: .74; color: #efbb00; margin: 23px 6px 0 0; }

/* sales chart */
.right .card { margin-left: 1px; }
.sales { width: 490px; height: 501px; padding-top: 30px; }
.sheads { display: flex; padding-left: 32px; }
.sheads h2 { --sx: .935; width: 209px; line-height: 27px; }
.chart { width: 490px; height: 380px; margin-top: 12px; }
.chart text { font-size: 14px; font-weight: 600; fill: #666; }
.chart .hours text { font-weight: 700; }

/* catering */
.right a { color: #cf0000; white-space: nowrap; }
.catering { width: 491px; height: 390px; margin-top: 21px; padding: 26px 0 0 32px; }
.chead { display: flex; line-height: 30px; }
.chead h2 { --sx: .885; width: 247px; margin-left: -2px; }
.chead a { width: 126px; }
.chead a + a { width: 42px; }
.chead .plus { margin: 2px 0 0 1px; }
.order { width: 427px; height: 33px; margin-top: 16px; border: 1px solid #e2e2e4; box-shadow: 0 2px 1px rgba(0,0,0,.25); font-size: 15px; line-height: 28px; letter-spacing: -.17px; color: #333; }
.order.open { height: 261px; margin-top: 4px; line-height: 32px; }
.ohead { display: grid; grid-template-columns: 55px 181px 141px 16px; padding-left: 17px; }
.open .ohead { grid-template-columns: 70px 166px 141px 16px; height: 31px; }
.ohead .chev { margin-top: 13px; }
.open .ohead .chev { margin-top: 9px; }
.done { color: #8aa50a; }
.pending { color: #f28c1e; }
.form { display: flex; padding-left: 17px; }
.left { width: 223px; display: grid; grid-template: 23px 23px 52px 34px / 58px 165px; row-gap: 9px; padding-top: 11px; line-height: 21px; align-content: start; }
.in { border: 1px solid #d2d2d6; padding-left: 6px; line-height: 19px; white-space: nowrap; }
.tall { margin-top: -3px; height: 52px; line-height: 24px; }
.left label:nth-of-type(3) { margin-top: -3px; line-height: 26px; }
.sms { grid-column: 1 / 3; width: 154px; height: 34px; margin: 44px 0 0 56px; padding-right: 8px; background: #efbb00; border: 1px solid #d2d2d6; color: #444; text-align: center; }
.sms span, .save span { --sx: .87; font-size: 21px; line-height: 33px; transform-origin: 50% 50%; }
.rightf { width: 164px; margin-left: 11px; }
.addr { width: 162px; height: 52px; padding: 4px 0 0 8px; }
.pick { display: block; line-height: 20px; margin-top: 6px; }
.sel { height: 27px; display: flex; line-height: 23px; }
.sel .chev { margin: 9px 2px 0 auto; }
.wide { width: 160px; margin: 4px 0 0 2px; padding-left: 41px; }
.line { display: flex; margin-top: 4px; line-height: 28px; }
.line label { width: 39px; }
.line .in { width: 123px; }
.yes { padding-left: 20px; }
.when { padding-left: 8px; gap: 9px; line-height: 26px; }
.save { width: 161px; height: 34px; margin: 9px 0 0 2px; background: #98b400; border: 1px solid #d2d2d6; color: #fff; display: block; text-align: center; }
.save span { line-height: 32px; }

/* weekly sales */
.weekly { width: 494px; height: 177px; margin-top: 22px; padding: 16px 0 0 20px; }
.whead { display: flex; justify-content: space-between; padding: 0 13px 0 3px; line-height: 21px; }
.whead a { margin-top: -1px; }
.metrics { display: flex; margin-top: 7px; gap: 3px; }
.metric { width: 90px; height: 102px; box-shadow: 0 3px 4px rgba(0,0,0,.22), 0 0 2px rgba(0,0,0,.25); }
.metric:nth-child(2) { margin-left: 1px; }
.metric h5 { background: #98b400; color: #fff; height: 31px; font-size: 15px; font-weight: 700; line-height: 34px; padding-left: 14px; letter-spacing: -.95px; white-space: nowrap; }
.metric.bad h5 { background: #b90000; }
.metric b { display: block; font-size: 15px; font-weight: 600; color: #666; padding: 8px 0 0 12px; letter-spacing: -.6px; }
.metric p { display: flex; font-size: 15px; color: #888; padding: 7px 0 0 9px; letter-spacing: -.5px; }
.metric svg { width: 15px; height: 19px; margin-right: 8px; fill: #a8cb00; }
.metric.bad svg { fill: #c40000; }

/* tasks */
.tasks { width: 493px; height: 226px; margin-top: 23px; padding: 22px 0 0 26px; }
.tasks h2 { --sx: .917; margin: 0 0 7px -3px; }
.task { width: 429px; height: 32px; display: grid; grid-template-columns: 44px 216px 143px 26px; line-height: 28px; border-bottom: 1px solid #bbb; }
.task:nth-child(3) { height: 31px; } .task:nth-child(4) { height: 33px; line-height: 29px; } .task:last-child { border: 0; }
.truck { width: 34px; height: 20px; margin-top: 5px; stroke: #d81e05; stroke-width: 1.1; }
.pen { width: 23px; height: 23px; margin: 4px 0 0 9px; stroke: #98b400; stroke-width: 1.4; }
.dot { width: 26px; height: 26px; margin-top: 3px; }
.todo { background: #d3d3d3; border-radius: 50%; margin-top: 1px; }

/* notes */
.right .notes { margin-left: 0; width: 495px; height: 213px; margin-top: 27px; padding: 11px 0 0 32px; }
.nhead { display: flex; justify-content: space-between; padding-right: 25px; line-height: 28px; }
.nhead h2 { --sx: .88; margin-left: -2px; }
.compose { display: flex; margin-top: 20px; }
.box { width: 402px; height: 52px; border: 1px solid #e2e2e4; }
.compose .plus { margin: -2px 0 0 12px; }
.note { display: flex; margin-top: 16px; font-size: 15px; line-height: 18px; letter-spacing: -.11px; color: #333; white-space: nowrap; }
.by { width: 116px; line-height: 21px; margin-top: -1px; padding-left: 1px; letter-spacing: -.3px; }
.note p { width: 300px; }
.note svg { width: 22px; height: 23px; margin: 2px 0 0 1px; stroke: #666; stroke-width: 1.3; }
```
